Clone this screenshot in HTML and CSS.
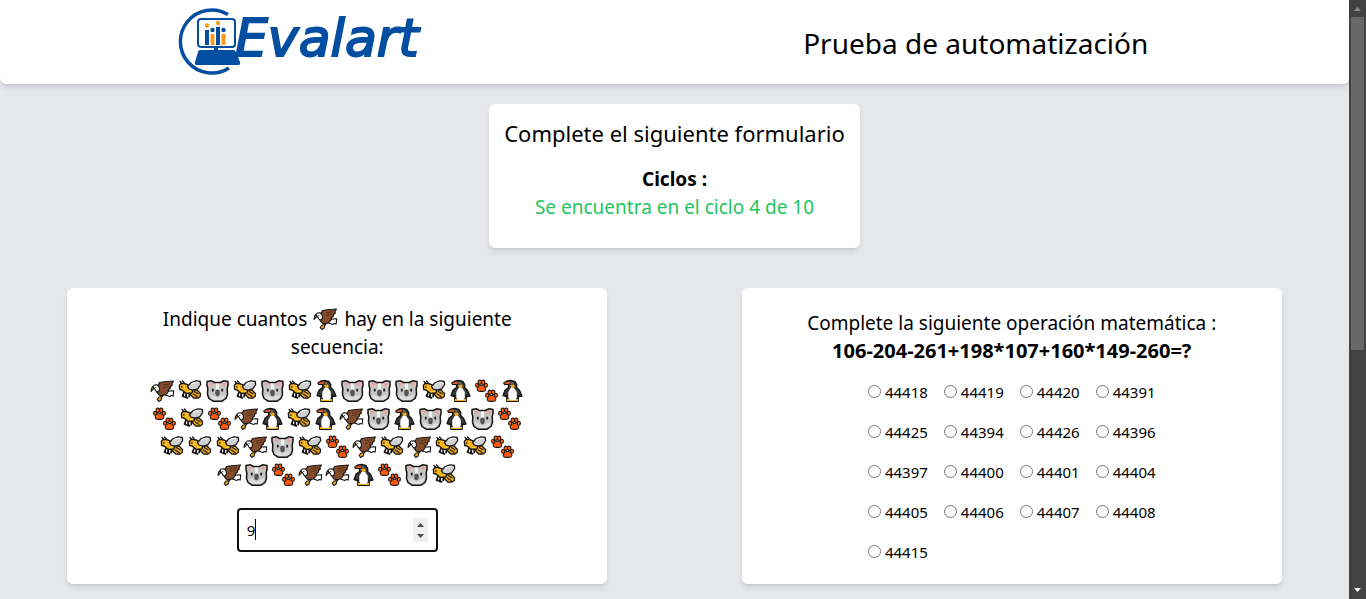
FILE: index.html
```html
<!DOCTYPE html>
<html lang="es">
<head>
<meta charset="utf-8">
<meta name="viewport" content="width=device-width, initial-scale=1">
<title>Prueba de automatización</title>
<link rel="stylesheet" href="styles.css">
</head>
<body>
<svg class="sprites" aria-hidden="true">
  <symbol id="eagle" viewBox="0 0 24 24">
    <g stroke="#151515" stroke-width="1.100" stroke-linejoin="round" stroke-linecap="round">
      <path fill="#fff" d="M15 13.500l2.500-1.500 5.700-.3-.5 5.300-2-.5-1.500 1-4.200-1.500z"/>
      <path fill="#844c2c" d="M7 7.500L9 3.500l5-.7 9-.8-1.500 2.500.3 1.500-1.800 1.500-.2 1.800-2.300 1.700.5 1.500-2.500 3-3.500 1.300-3-.5-2.500-3L6 10z"/>
      <path fill="#fff" d="M1.800 8.200L3.800 6l2.500-.2 2.200 1.700.5 3-1.300 2.800-2.200-1-1.500-2.800z"/>
      <path fill="#f6ad19" d="M3 8L1 9.200.6 12.500l2.600-2.800z"/>
      <path fill="#f6ad19" d="M13 16.500l-2 2.200-.3 2.300-2.500 1.500-1.500-2L8.500 18l1.700-.3.800-1.200z"/>
    </g>
    <path d="M12.500 6l7-1.300M12.500 8.500l6-1.300" stroke="#4d2b19" stroke-width=".8"/>
    <circle cx="5.300" cy="8.500" r=".6" fill="#222"/>
  </symbol>
  <symbol id="bee" viewBox="0 0 24 24">
    <g stroke="#151515" stroke-width="1.300" stroke-linejoin="round" stroke-linecap="round">
      <path fill="#f6ad19" d="M13 10.500l6 .5 3.500 3.500-.3 3-2.200 1.500-4 .2-4-4z"/>
      <path fill="none" d="M3.500 4L2 2.500M6 3.500L4.500 2"/>
      <path fill="#252525" stroke-width="1.800" d="M6 13.500L4.500 17l1.500.8M8.500 14l-.8 4.300 1.800.5M11.500 14.500l-.3 3"/>
      <path fill="#f6ad19" d="M1.300 6.500L3 4.500h3l3 .8 6 4.700-1 4-6 .3-4-3.300-2.300-.5z"/>
      <path fill="#d0d1d3" d="M9.500 7.500l3.700-4L18 1.800l4.200.7.500 3-3 4.300-4.700 1.400-4-1.200z"/>
    </g>
    <path d="M15.800 12.200l4.700 2.800M15 14.700l4.500 3" stroke="#1d1d1d" stroke-width="1.300"/>
    <path d="M13 5.500l3-1.800 4.500-.3" fill="none" stroke="#f4f4f4" stroke-width="1.200"/>
    <path d="M6.500 6l-.5 5M9 12.500h4" stroke="#fbd33c" stroke-width="1.200"/>
    <circle cx="3.800" cy="8" r="1" fill="#6d4519"/>
  </symbol>
  <symbol id="koala" viewBox="0 0 24 24">
    <path fill="#c6c6c6" stroke="#151515" stroke-width="1.500" stroke-linejoin="round" d="M1.500 2.500L6 1.800 9 3.500h6l3-1.700 4.500.7v4l-.8 3 .3 6-1.500 4-4 2.700h-9l-4-2.700-1.500-4 .3-6-.8-3z"/>
    <path fill="#f4a09a" d="M4 4l2.500-.2L8 5 5 8zM20 4l-2.500-.2L16 5l3 3z"/>
    <path fill="#f1f1f1" d="M10.500 4.500h3V12h-3z"/>
    <path fill="#dedede" d="M4 15.500l5 1.500 3 2 3-2 5-1.500-1.500 3.500-3 2h-7l-3-2z"/>
    <ellipse cx="12" cy="13.800" rx="2.300" ry="3.400" fill="#555"/>
    <path d="M7.300 9.800v2.800M16.700 9.800v2.800" stroke="#1d1d1d" stroke-width="1.800"/>
  </symbol>
  <symbol id="penguin" viewBox="0 0 22 24">
    <path fill="#383b3c" stroke="#111" stroke-width="1.300" stroke-linejoin="round" d="M2.300 4L5 2.200l4-.9 4.300 1 2 3.200-.2 3 3 3 2.400 5.500-3 .5-.8-1v5.800H5.300v-5.800l-1 1-2.800-.8 2-5.500L7 8.500V5.300H3z"/>
    <path fill="#f6ad19" d="M8.500 6l4-.5.800 2.500-3 2zM5.500 20h11v2h-11z"/>
    <path fill="#fff" d="M9.300 8.800l3.400.2 2.600 4v5.500L14 21H8.300L6.800 18.500V13z"/>
    <path fill="#e95420" d="M3 3.700L8 2.500l1 1.800-2 .7H3.300z"/>
    <circle cx="10.500" cy="4" r=".6" fill="#fff"/>
  </symbol>
  <symbol id="paws" viewBox="0 0 24 24">
    <g id="paw">
      <g fill="#151515" stroke="#151515" stroke-width="2.400" stroke-linejoin="round">
        <path d="M7 7c2 0 4 2.100 3.600 3.600-.6 1.700-2.200 1.100-3.600 1.100s-3 .6-3.600-1.100C3 9.100 5 7 7 7z"/>
        <ellipse cx="2.600" cy="6.300" rx=".9" ry="1.300"/><ellipse cx="5.300" cy="3.300" rx="1" ry="1.500"/>
        <ellipse cx="8.700" cy="3.300" rx="1" ry="1.500"/><ellipse cx="11.400" cy="6.300" rx=".9" ry="1.300"/>
      </g>
      <g fill="#ff5a0a">
        <path d="M7 6.800c2.200 0 4.200 2.300 3.800 3.800-.6 1.800-2.300 1.200-3.800 1.200s-3.200.6-3.800-1.200C2.800 9.100 4.800 6.800 7 6.800z"/>
        <ellipse cx="2.600" cy="6.300" rx="1.100" ry="1.500"/><ellipse cx="5.300" cy="3.300" rx="1.200" ry="1.700"/>
        <ellipse cx="8.700" cy="3.300" rx="1.200" ry="1.700"/><ellipse cx="11.400" cy="6.300" rx="1.100" ry="1.500"/>
      </g>
    </g>
    <use href="#paw" x="10" y="10"/>
  </symbol>
</svg>

<div class="window">
  <div class="page">
    <header class="topbar">
      <div class="topbar-cell">
        <svg class="logo" viewBox="0 0 230 70" role="img" aria-label="Evalart">
          <path d="M42 6.500A31.500 31.500 0 1 0 43 60" fill="none" stroke="#034ea1" stroke-width="3.500"/>
          <path d="M15 11h31q3 0 3 3v22q0 3-3 3H16q-4 0-4-3V14q0-3 3-3z" fill="#fff" stroke="#034ea1" stroke-width="2"/>
          <path d="M14 42h33q2 0 3 2l4 10q1 3-2 3H11q-3 0-2-3l3-10q0-2 2-2z" fill="#034ea1"/>
          <path d="M28 38h4v5h-4z" fill="#034ea1"/>
          <path d="M21 22v15M32 19v18" stroke="#034ea1" stroke-width="4"/>
          <path d="M26.500 26v11M37.500 26v11" stroke="#f89b1c" stroke-width="4"/>
          <circle cx="21" cy="17.500" r="2.200" fill="#f89b1c"/><circle cx="32" cy="15" r="2.200" fill="#f89b1c"/>
          <circle cx="26.500" cy="22" r="2.200" fill="#034ea1"/><circle cx="37.500" cy="22" r="2.200" fill="#034ea1"/>
          <text class="logo-text" x="49" y="48">Evalart</text>
        </svg>
      </div>
      <div class="topbar-cell"><h1 class="title">Prueba de automatización</h1></div>
    </header>

    <main>
      <section class="card intro">
        <h2 class="intro-title">Complete el siguiente formulario</h2>
        <p class="strong">Ciclos :</p>
        <p class="cycle">Se encuentra en el ciclo 4 de 10</p>
      </section>

      <form class="questions">
        <section class="card question">
          <label class="prompt" for="count"><span class="prompt-line"><span>Indique cuantos</span><svg class="emoji"><use href="#eagle"/></svg><span>hay en la siguiente</span></span> <span class="prompt-line">secuencia:</span></label>
          <div class="sequence">
            <div class="row"><svg class="emoji"><use href="#eagle"/></svg><svg class="emoji bee"><use href="#bee"/></svg><svg class="emoji"><use href="#koala"/></svg><svg class="emoji bee"><use href="#bee"/></svg><svg class="emoji"><use href="#koala"/></svg><svg class="emoji bee"><use href="#bee"/></svg><svg class="emoji penguin"><use href="#penguin"/></svg><svg class="emoji"><use href="#koala"/></svg><svg class="emoji"><use href="#koala"/></svg><svg class="emoji"><use href="#koala"/></svg><svg class="emoji bee"><use href="#bee"/></svg><svg class="emoji penguin"><use href="#penguin"/></svg><svg class="emoji"><use href="#paws"/></svg><svg class="emoji penguin"><use href="#penguin"/></svg></div>
            <div class="row"><svg class="emoji"><use href="#paws"/></svg><svg class="emoji bee"><use href="#bee"/></svg><svg class="emoji"><use href="#paws"/></svg><svg class="emoji"><use href="#eagle"/></svg><svg class="emoji penguin"><use href="#penguin"/></svg><svg class="emoji bee"><use href="#bee"/></svg><svg class="emoji penguin"><use href="#penguin"/></svg><svg class="emoji"><use href="#eagle"/></svg><svg class="emoji"><use href="#koala"/></svg><svg class="emoji penguin"><use href="#penguin"/></svg><svg class="emoji"><use href="#koala"/></svg><svg class="emoji penguin"><use href="#penguin"/></svg><svg class="emoji"><use href="#koala"/></svg><svg class="emoji"><use href="#paws"/></svg></div>
            <div class="row"><svg class="emoji bee"><use href="#bee"/></svg><svg class="emoji bee"><use href="#bee"/></svg><svg class="emoji bee"><use href="#bee"/></svg><svg class="emoji"><use href="#eagle"/></svg><svg class="emoji"><use href="#koala"/></svg><svg class="emoji bee"><use href="#bee"/></svg><svg class="emoji"><use href="#paws"/></svg><svg class="emoji"><use href="#eagle"/></svg><svg class="emoji bee"><use href="#bee"/></svg><svg class="emoji"><use href="#eagle"/></svg><svg class="emoji bee"><use href="#bee"/></svg><svg class="emoji bee"><use href="#bee"/></svg><svg class="emoji"><use href="#paws"/></svg></div>
            <div class="row"><svg class="emoji"><use href="#eagle"/></svg><svg class="emoji"><use href="#koala"/></svg><svg class="emoji"><use href="#paws"/></svg><svg class="emoji"><use href="#eagle"/></svg><svg class="emoji"><use href="#eagle"/></svg><svg class="emoji penguin"><use href="#penguin"/></svg><svg class="emoji"><use href="#paws"/></svg><svg class="emoji"><use href="#koala"/></svg><svg class="emoji bee"><use href="#bee"/></svg></div>
          </div>
          <div class="number-field"><input class="number" id="count" type="number" value="9"><span class="caret"></span></div>
        </section>

        <fieldset class="card question math">
          <p>Complete la siguiente operación matemática :</p>
          <p class="strong expression">106-204-261+198*107+160*149-260=?</p>
          <div class="options">
            <label class="option"><input type="radio" name="result">44418</label>
            <label class="option"><input type="radio" name="result">44419</label>
            <label class="option"><input type="radio" name="result">44420</label>
            <label class="option"><input type="radio" name="result">44391</label>
            <label class="option"><input type="radio" name="result">44425</label>
            <label class="option"><input type="radio" name="result">44394</label>
            <label class="option"><input type="radio" name="result">44426</label>
            <label class="option"><input type="radio" name="result">44396</label>
            <label class="option"><input type="radio" name="result">44397</label>
            <label class="option"><input type="radio" name="result">44400</label>
            <label class="option"><input type="radio" name="result">44401</label>
            <label class="option"><input type="radio" name="result">44404</label>
            <label class="option"><input type="radio" name="result">44405</label>
            <label class="option"><input type="radio" name="result">44406</label>
            <label class="option"><input type="radio" name="result">44407</label>
            <label class="option"><input type="radio" name="result">44408</label>
            <label class="option"><input type="radio" name="result">44415</label>
          </div>
        </fieldset>
      </form>
    </main>
  </div>
  <div class="scrollbar" aria-hidden="true">
    <svg class="arrow" viewBox="0 0 17 17"><path d="M5 11h7L8.500 7z" fill="#8a8a8a"/></svg>
    <div class="thumb"></div>
    <div class="track"></div>
    <svg class="arrow" viewBox="0 0 17 17"><path d="M5 6h7l-3.500 4z" fill="#fff"/></svg>
  </div>
</div>
</body>
</html>
```
FILE: styles.css
```css
* { box-sizing: border-box; }
body, h1, h2, p { margin: 0; font-weight: 400; }
body {
  background: #e5e7eb;
  color: #000;
  font-family: "Noto Sans", "Open Sans", sans-serif;
  font-size: 19px;
  line-height: 28px;
}
.sprites { position: absolute; width: 0; height: 0; }
.window { display: flex; min-height: 100vh; }
.page { flex: 1; min-width: 0; }

.topbar {
  display: grid;
  grid-template-columns: 1fr 1fr;
  height: 84px;
  padding-top: 2px;
  background: #fff;
  border-radius: 0 0 6px 6px;
  box-shadow: 0 4px 6px -1px rgba(0, 0, 0, .1), 0 2px 4px -2px rgba(0, 0, 0, .1);
}
.topbar-cell {
  display: flex;
  align-items: center;
  justify-content: center;
  padding-right: 72px;
}
.logo { width: 230px; height: 70px; overflow: visible; }
.logo-text {
  font: italic 52px "DejaVu Sans", sans-serif;
  fill: #034ea1;
  stroke: #034ea1;
  stroke-width: 2;
}
.title { font-size: 28px; line-height: 36px; white-space: nowrap; }

.card {
  background: #fff;
  border: 0;
  border-radius: 6px;
  text-align: center;
  box-shadow: 0 4px 6px -1px rgba(0, 0, 0, .1), 0 2px 4px -2px rgba(0, 0, 0, .1);
}
.intro {
  width: fit-content;
  margin: 20px auto 40px;
  padding: 13px 15px 27px;
}
.intro-title { margin-bottom: 16px; font-size: 22px; line-height: 32px; }
.strong { font-weight: 700; }
.expression { font-size: 20px; }
.cycle { color: #22c55e; }

.questions {
  display: grid;
  grid-template-columns: 1fr 1fr;
  justify-items: center;
  padding-bottom: 15px;
}
.question {
  width: 80%;
  min-width: 0;
  margin: 0;
  padding: 17px 16px 20px;
}
.prompt { display: block; margin-bottom: 16px; }
.prompt-line { display: flex; align-items: center; justify-content: center; gap: 5px; }
.emoji { display: block; width: 27px; height: 24px; }
.emoji.bee { width: 28px; }
.emoji.penguin { width: 25px; }
.sequence { margin-bottom: 19px; }
.row { display: flex; align-items: center; justify-content: center; height: 28px; }
.number-field { position: relative; width: 201px; margin: 0 auto 12px; }
.number {
  display: block;
  width: 100%;
  height: 44px;
  padding: 8px;
  border: 2px solid #101010;
  border-radius: 4px;
  background: #fff;
  font: 15px/24px "Noto Sans", sans-serif;
  outline: 0;
}
.number::-webkit-inner-spin-button {
  appearance: none;
  -webkit-appearance: none;
  width: 15px;
  height: 24px;
  opacity: 1;
  background: #f0f0f0 url("data:image/svg+xml,%3Csvg xmlns='http://www.w3.org/2000/svg' width='15' height='24'%3E%3Cpath d='M4 9h7L7.500 5zM4 16h7l-3.500 4z' fill='%23505050'/%3E%3C/svg%3E") no-repeat;
}
.caret {
  position: absolute;
  left: 18px;
  top: 11px;
  width: 1px;
  height: 21px;
  background: #000;
}

.math { padding-top: 21px; }
.options {
  display: grid;
  grid-template-columns: repeat(4, max-content);
  justify-content: center;
  gap: 16px;
  margin-top: 15px;
}
.option {
  display: flex;
  align-items: center;
  gap: 4px;
  font-size: 15px;
  line-height: 24px;
}
.option input { width: 13px; height: 13px; margin: 0 0 2px; }

.scrollbar {
  display: flex;
  flex-direction: column;
  width: 17px;
  background: #424242;
}
.arrow { width: 17px; height: 17px; }
.thumb { flex: 333; margin: 0 2px; background: #686868; }
.track { flex: 232; }
```
